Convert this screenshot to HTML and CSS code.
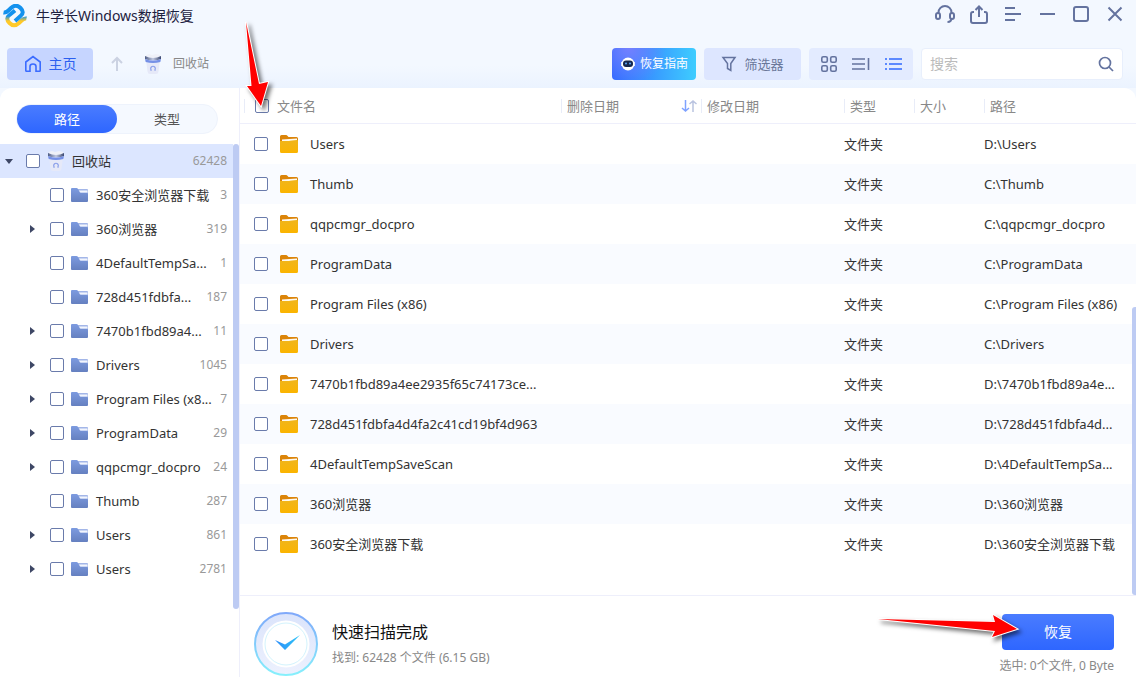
FILE: index.html
```
<!DOCTYPE html>
<html lang="zh-CN">
<head>
<meta charset="utf-8">
<meta name="viewport" content="width=device-width, initial-scale=1">
<title>牛学长Windows数据恢复</title>
<link rel="stylesheet" href="styles.css">
</head>
<body>
<svg class="defs" width="0" height="0" aria-hidden="true">
  <defs>
    <linearGradient id="g-logo" gradientUnits="userSpaceOnUse" x1="0" y1="12" x2="0" y2="17"><stop offset="0" stop-color="#1492ee"/><stop offset="1" stop-color="#ffc928"/></linearGradient>
    <linearGradient id="g-blue" x1="0" y1="0" x2="0" y2="1"><stop offset="0" stop-color="#7d9be0"/><stop offset="1" stop-color="#6580c0"/></linearGradient>
    <linearGradient id="g-gold" x1="0" y1="0" x2="0" y2="1"><stop offset="0" stop-color="#f0b51c"/><stop offset="1" stop-color="#fbb400"/></linearGradient>
    <linearGradient id="g-rim" x1="0" y1="0" x2="1" y2="0"><stop offset="0" stop-color="#4f5d85"/><stop offset=".5" stop-color="#c3cbe2"/><stop offset="1" stop-color="#3c4870"/></linearGradient>
    <linearGradient id="g-ring" x1="0" y1="0" x2="0" y2="1"><stop offset="0" stop-color="#7fa8fa"/><stop offset="1" stop-color="#86f0fc"/></linearGradient>
    <linearGradient id="g-disc" x1="0" y1="0" x2="0" y2="1"><stop offset="0" stop-color="#dbe4fb"/><stop offset="1" stop-color="#edf1fe"/></linearGradient>
    <linearGradient id="g-tick" x1="0" y1="0" x2="1" y2="0"><stop offset="0" stop-color="#2c8cf9"/><stop offset="1" stop-color="#2fc6f7"/></linearGradient>
    <symbol id="folder-blue" viewBox="0 0 18 16">
      <path d="M7 2H16Q17 2 17 3V8H7Z" fill="#a3b6e8"/>
      <path d="M8 3.500H16.500V5.500H9Z" fill="#f2f5fd"/>
      <path d="M0 2Q0 1 1 1H5.500Q6.500 1 7 2L8.500 5Q9 6 10 6H16Q17 6 17 7V14Q17 15 16 15H1Q0 15 0 14Z" fill="url(#g-blue)"/>
    </symbol>
    <symbol id="folder-gold" viewBox="0 0 18 18">
      <path d="M0 1.500Q0 0 1.500 0H6Q7 0 7.600 1L8.500 2H16.500Q18 2 18 3.500V9H0Z" fill="#db8409"/>
      <path d="M2 4.500L17 3.500V8H2Z" fill="#fffaf0"/>
      <path d="M0 6H9Q10.500 5.200 17 5Q18 5 18 6V16.500Q18 18 16.500 18H1.500Q0 18 0 16.500Z" fill="url(#g-gold)"/>
    </symbol>
    <symbol id="bin" viewBox="0 0 18 20">
      <path d="M2 1L5 0L8 1L12 0L16 1V5H2Z" fill="#eff1f8"/>
      <path d="M1 2Q9 6 17 2V5Q9 8 1 5Z" fill="url(#g-rim)"/>
      <path d="M2 6H16L14.500 17.500Q14.200 20 12 20H6Q3.800 20 3.500 17.500Z" fill="#e6e9f8"/>
      <path d="M1 5Q9 8 17 5L16.300 8Q9 10 1.700 8Z" fill="#7590e6"/>
      <path d="M7.500 16.300A2.300 2.300 0 1 1 10.500 16.300M7.500 16.500H6.500M10.500 16.500H11.500" fill="none" stroke="#8ba0ea" stroke-width="1.200"/>
    </symbol>
  </defs>
</svg>

<header class="titlebar">
  <svg class="logo" viewBox="0 0 26 24" aria-hidden="true">
    <path d="M24.500 14.500Q22 14 19 17L17 19Q12 23.500 7.500 19T7.500 11L13 6.500" fill="none" stroke="url(#g-logo)" stroke-width="4"/>
    <path d="M1.500 8.500Q4 9 7 6L9 4Q14 -.5 18.500 4T18.500 12L13 17" fill="none" stroke="#1492ee" stroke-width="4"/>
  </svg>
  <h1 class="app-name">牛学长Windows数据恢复</h1>
  <div class="window-tools">
    <button type="button" aria-label="客服"><svg viewBox="0 0 22 22"><path d="M4.500 10V8.500A6.500 6.500 0 0 1 17.500 8.500V10M17.500 14Q17.500 18 13.500 18"/><rect x="2" y="9" width="4" height="6" rx="2"/><rect x="16" y="9" width="4" height="6" rx="2"/></svg></button>
    <button type="button" aria-label="导出"><svg viewBox="0 0 22 22"><path d="M6 8H5Q3 8 3 10V17Q3 19 5 19H17Q19 19 19 17V10Q19 8 17 8H16M11 13V3M7.500 6L11 2.500L14.500 6"/></svg></button>
    <button type="button" aria-label="菜单"><svg viewBox="0 0 22 22"><path d="M3 4H13M3 10H19M3 16H13"/></svg></button>
    <button type="button" aria-label="最小化"><svg viewBox="0 0 22 22"><path d="M4 10H19"/></svg></button>
    <button type="button" aria-label="最大化"><svg viewBox="0 0 22 22"><rect x="4" y="3" width="14" height="14" rx="2"/></svg></button>
    <button type="button" aria-label="关闭"><svg viewBox="0 0 22 22"><path d="M4.500 3.500L17.500 16.500M17.500 3.500L4.500 16.500"/></svg></button>
  </div>
</header>

<nav class="toolbar">
  <button type="button" class="home"><svg viewBox="0 0 18 18" aria-hidden="true"><path d="M6 16.200H2.500Q1.800 16.200 1.800 15.500V7L9 1.500L16.200 7V15.500Q16.200 16.200 15.500 16.200H12V11.500Q12 9 9 9T6 11.500Z"/></svg>主页</button>
  <button type="button" class="up" aria-label="上一级"><svg viewBox="0 0 14 16"><path d="M7 15V2M2 7L7 2L12 7"/></svg></button>
  <div class="crumb"><svg aria-hidden="true"><use href="#bin"/></svg><span>回收站</span></div>
  <button type="button" class="guide"><svg viewBox="0 0 16 16" aria-hidden="true"><circle cx="8" cy="8" r="6.500" fill="#fff"/><path d="M1 6H2V10H1ZM14 6H15V10H14Z" fill="#dce7ff"/><rect x="3" y="4.500" width="10" height="6.500" rx="3" fill="#16284f"/><circle cx="6" cy="7.500" r="1" fill="#5ba8ff"/><circle cx="10" cy="7.500" r="1" fill="#5ba8ff"/></svg>恢复指南</button>
  <button type="button" class="filter"><svg viewBox="0 0 16 16" aria-hidden="true"><path d="M2 1.500H14L9.800 7.500V14.500L6.500 12.500V7.500Z"/></svg>筛选器</button>
  <div class="views">
    <button type="button" aria-label="网格"><svg viewBox="0 0 18 18"><rect x="1.800" y="1.800" width="5.500" height="5.500" rx="1.500"/><rect x="10.700" y="1.800" width="5.500" height="5.500" rx="1.500"/><rect x="1.800" y="10.700" width="5.500" height="5.500" rx="1.500"/><rect x="10.700" y="10.700" width="5.500" height="5.500" rx="1.500"/></svg></button>
    <button type="button" aria-label="预览"><svg viewBox="0 0 18 18"><path d="M0 4H13M0 9H13M0 14H13M16.500 3V15"/></svg></button>
    <button type="button" class="active" aria-label="列表"><svg viewBox="0 0 18 18"><path d="M1 4H3M1 9H3M1 14H3M5 4H18M5 9H18M5 14H18"/></svg></button>
  </div>
  <label class="search"><input type="search" placeholder="搜索" aria-label="搜索"><svg viewBox="0 0 16 16" aria-hidden="true"><circle cx="7" cy="7" r="5.500"/><path d="M11 11L15 15"/></svg></label>
</nav>

<main class="panel">
  <aside class="sidebar">
    <div class="tabs"><button type="button" class="tab on">路径</button><button type="button" class="tab">类型</button></div>
    <div class="tree-area">
      <ul class="tree">
        <li class="root"><i class="caret down"></i><label><input type="checkbox"><svg class="bin"><use href="#bin"/></svg><span>回收站</span></label><em>62428</em></li>
        <li><i></i><label><input type="checkbox"><svg><use href="#folder-blue"/></svg><span>360安全浏览器下载</span></label><em>3</em></li>
        <li><i class="caret"></i><label><input type="checkbox"><svg><use href="#folder-blue"/></svg><span>360浏览器</span></label><em>319</em></li>
        <li><i></i><label><input type="checkbox"><svg><use href="#folder-blue"/></svg><span>4DefaultTempSa...</span></label><em>1</em></li>
        <li><i></i><label><input type="checkbox"><svg><use href="#folder-blue"/></svg><span>728d451fdbfa...</span></label><em>187</em></li>
        <li><i class="caret"></i><label><input type="checkbox"><svg><use href="#folder-blue"/></svg><span>7470b1fbd89a4...</span></label><em>11</em></li>
        <li><i class="caret"></i><label><input type="checkbox"><svg><use href="#folder-blue"/></svg><span>Drivers</span></label><em>1045</em></li>
        <li><i class="caret"></i><label><input type="checkbox"><svg><use href="#folder-blue"/></svg><span>Program Files (x8...</span></label><em>7</em></li>
        <li><i class="caret"></i><label><input type="checkbox"><svg><use href="#folder-blue"/></svg><span>ProgramData</span></label><em>29</em></li>
        <li><i class="caret"></i><label><input type="checkbox"><svg><use href="#folder-blue"/></svg><span>qqpcmgr_docpro</span></label><em>24</em></li>
        <li><i></i><label><input type="checkbox"><svg><use href="#folder-blue"/></svg><span>Thumb</span></label><em>287</em></li>
        <li><i class="caret"></i><label><input type="checkbox"><svg><use href="#folder-blue"/></svg><span>Users</span></label><em>861</em></li>
        <li><i class="caret"></i><label><input type="checkbox"><svg><use href="#folder-blue"/></svg><span>Users</span></label><em>2781</em></li>
      </ul>
      <div class="tree-thumb"></div>
    </div>
  </aside>

  <section class="content">
    <div class="files">
      <table>
        <colgroup><col class="c-name"><col class="c-deleted"><col class="c-modified"><col class="c-type"><col class="c-size"><col class="c-path"></colgroup>
        <thead>
          <tr>
            <th><label class="head"><input type="checkbox">文件名</label></th>
            <th><span class="head">删除日期<svg class="sort" viewBox="0 0 16 14" aria-hidden="true"><path d="M4.500 1V12M1 9L4.500 12L8 9" stroke="#7fa2ff"/><path d="M12 13V2M8.500 5L12 2L15.500 5" stroke="#b9c3e0"/></svg></span></th>
            <th><span class="head">修改日期</span></th>
            <th><span class="head">类型</span></th>
            <th><span class="head">大小</span></th>
            <th><span class="head">路径</span></th>
          </tr>
        </thead>
        <tbody>
          <tr><td><label class="file"><input type="checkbox"><svg><use href="#folder-gold"/></svg>Users</label></td><td></td><td></td><td>文件夹</td><td></td><td>D:\Users</td></tr>
          <tr><td><label class="file"><input type="checkbox"><svg><use href="#folder-gold"/></svg>Thumb</label></td><td></td><td></td><td>文件夹</td><td></td><td>C:\Thumb</td></tr>
          <tr><td><label class="file"><input type="checkbox"><svg><use href="#folder-gold"/></svg>qqpcmgr_docpro</label></td><td></td><td></td><td>文件夹</td><td></td><td>C:\qqpcmgr_docpro</td></tr>
          <tr><td><label class="file"><input type="checkbox"><svg><use href="#folder-gold"/></svg>ProgramData</label></td><td></td><td></td><td>文件夹</td><td></td><td>C:\ProgramData</td></tr>
          <tr><td><label class="file"><input type="checkbox"><svg><use href="#folder-gold"/></svg>Program Files (x86)</label></td><td></td><td></td><td>文件夹</td><td></td><td>C:\Program Files (x86)</td></tr>
          <tr><td><label class="file"><input type="checkbox"><svg><use href="#folder-gold"/></svg>Drivers</label></td><td></td><td></td><td>文件夹</td><td></td><td>C:\Drivers</td></tr>
          <tr><td><label class="file"><input type="checkbox"><svg><use href="#folder-gold"/></svg>7470b1fbd89a4ee2935f65c74173ce...</label></td><td></td><td></td><td>文件夹</td><td></td><td>D:\7470b1fbd89a4e...</td></tr>
          <tr><td><label class="file"><input type="checkbox"><svg><use href="#folder-gold"/></svg>728d451fdbfa4d4fa2c41cd19bf4d963</label></td><td></td><td></td><td>文件夹</td><td></td><td>D:\728d451fdbfa4d...</td></tr>
          <tr><td><label class="file"><input type="checkbox"><svg><use href="#folder-gold"/></svg>4DefaultTempSaveScan</label></td><td></td><td></td><td>文件夹</td><td></td><td>D:\4DefaultTempSa...</td></tr>
          <tr><td><label class="file"><input type="checkbox"><svg><use href="#folder-gold"/></svg>360浏览器</label></td><td></td><td></td><td>文件夹</td><td></td><td>D:\360浏览器</td></tr>
          <tr><td><label class="file"><input type="checkbox"><svg><use href="#folder-gold"/></svg>360安全浏览器下载</label></td><td></td><td></td><td>文件夹</td><td></td><td>D:\360安全浏览器下载</td></tr>
        </tbody>
      </table>
      <div class="files-thumb"></div>
    </div>
    <footer class="status">
      <svg class="done" viewBox="0 0 64 64" aria-hidden="true">
        <circle cx="32" cy="32" r="31" fill="url(#g-disc)" stroke="url(#g-ring)" stroke-width="2"/>
        <circle cx="32" cy="32" r="23.500" fill="#fff"/>
        <circle cx="32" cy="32" r="21" fill="none" stroke="#d3f3fd"/>
        <path d="M21 28L31 32.500L46 23L31 38Z" fill="url(#g-tick)"/>
      </svg>
      <div class="summary"><h2>快速扫描完成</h2><p>找到: 62428 个文件 (6.15 GB)</p></div>
      <div class="action"><button type="button" class="recover">恢复</button><p>选中: 0个文件, 0 Byte</p></div>
    </footer>
  </section>
</main>

<svg class="pointer to-checkbox" viewBox="0 0 40 100" aria-hidden="true"><path d="M6 5L19 67L28 65L21 89L7 69L11.500 69Z"/></svg>
<svg class="pointer to-recover" viewBox="0 0 150 40" aria-hidden="true"><path d="M4 10L121 13L119 6L143 20L118 28L121 22Z"/></svg>
</body>
</html>
```

FILE: styles.css
```
* { box-sizing: border-box; }

body {
  position: relative;
  display: flex;
  flex-direction: column;
  min-height: 100vh;
  margin: 0;
  overflow-x: hidden;
  background: #f3f8ff;
  color: #333;
  font: 13px/20px "Noto Sans", "Noto Sans CJK SC", sans-serif;
}

button {
  display: flex;
  align-items: center;
  justify-content: center;
  padding: 0;
  border: 0;
  background: none;
  color: inherit;
  font: inherit;
}

h1, h2, p, ul { margin: 0; padding: 0; font-weight: 400; }

svg { flex: none; fill: none; }

.defs { position: absolute; }

input[type="checkbox"] {
  flex: none;
  width: 14px;
  height: 14px;
  margin: 0;
  appearance: none;
  border: 1px solid #6a7bab;
  border-radius: 2px;
  background: #fff;
}

/* Title bar */
.titlebar {
  display: flex;
  align-items: center;
  height: 32px;
  padding: 0 10px 0 2px;
}

.logo { width: 26px; height: 24px; }

.app-name {
  margin-left: 8px;
  color: #1d2140;
  font-size: 14px;
  line-height: 32px;
}

.window-tools {
  display: flex;
  gap: 12px;
  height: 30px;
  margin: 0 0 2px auto;
}

.window-tools svg {
  width: 22px;
  height: 22px;
  stroke: #64739f;
  stroke-width: 2;
}

/* Toolbar */
.toolbar {
  display: flex;
  align-items: center;
  height: 56px;
  padding: 8px 13px 0 7px;
  background: linear-gradient(#f3f8ff 60%, #ebf3ff);
}

.home {
  gap: 7px;
  width: 86px;
  height: 32px;
  border-radius: 4px;
  background: #c6d5ff;
  color: #2b5ff0;
  font-size: 14px;
}

.home svg { width: 18px; height: 18px; stroke: #3b6cff; stroke-width: 1.6; }

.up { margin-left: 17px; }
.up svg { width: 14px; height: 16px; stroke: #cbd2e2; stroke-width: 2; }

.crumb {
  display: flex;
  align-items: center;
  gap: 11px;
  margin-left: 20px;
  color: #888;
  font-size: 12px;
}

.crumb svg { width: 18px; height: 20px; }

.guide {
  gap: 4px;
  width: 84px;
  height: 32px;
  margin-left: auto;
  border-radius: 4px;
  background: radial-gradient(circle at 20% 0, #7480ff, transparent 50%), linear-gradient(90deg, #3269ff, #3ecdff);
  color: #fff;
  font-size: 12px;
}

.guide svg { width: 16px; height: 16px; }

.filter {
  gap: 7px;
  width: 97px;
  height: 32px;
  margin-left: 8px;
  border-radius: 4px;
  background: #dde6ff;
  color: #6a7799;
}

.filter svg { width: 16px; height: 16px; stroke: #64739f; stroke-width: 1.5; }

.views {
  display: flex;
  align-items: center;
  justify-content: center;
  gap: 14px;
  width: 104px;
  height: 32px;
  margin-left: 8px;
  border-radius: 4px;
  background: #e3ebff;
}

.views svg { width: 18px; height: 18px; stroke: #64739f; stroke-width: 1.6; }
.views .active svg { stroke: #3169ff; }

.search {
  display: flex;
  align-items: center;
  width: 202px;
  height: 32px;
  margin-left: 8px;
  padding: 0 8px;
  border: 1px solid #e8effc;
  border-radius: 4px;
  background: #fff;
}

.search input {
  flex: 1;
  min-width: 0;
  padding: 0;
  border: 0;
  outline: 0;
  background: none;
  font: inherit;
  font-size: 14px;
}

.search input::placeholder { color: #bbb; }
.search svg { width: 16px; height: 16px; stroke: #64739f; stroke-width: 1.7; }

/* Panel */
.panel {
  display: flex;
  flex: 1;
  border-radius: 12px 12px 0 0;
  background: #fff;
}

.sidebar {
  flex: none;
  width: 240px;
  border-right: 1px solid #eeeffb;
}

.tabs {
  display: flex;
  width: 202px;
  margin: 16px 0 10px 16px;
  border: 1px solid #eef3fc;
  border-radius: 15px;
  background: #f5f9ff;
}

.tab {
  flex: 1;
  height: 28px;
  border-radius: 14px;
  color: #555;
}

.tab.on { background: linear-gradient(#4a7cff, #2e66ff); color: #fff; }

.tree-area { display: flex; }

.tree { flex: 1; min-width: 0; list-style: none; }

.tree li {
  display: flex;
  align-items: center;
  height: 34px;
  padding: 0 6px 0 30px;
}

.tree .root { padding-left: 5px; background: #dce6ff; }

.tree i { flex: none; width: 20px; }
.tree .root i { width: 21px; }

.caret::before {
  content: "";
  display: block;
  width: 0;
  border: 4px solid transparent;
  border-left: 5px solid #3e4765;
  border-right: 0;
}

.caret.down::before {
  border: 4px solid transparent;
  border-top: 5px solid #3e4765;
  border-bottom: 0;
}

.tree label { display: flex; align-items: center; white-space: nowrap; }

.tree svg { width: 18px; height: 16px; margin: 0 7px; }
.tree svg.bin { height: 20px; }

.tree em {
  margin-left: auto;
  color: #999;
  font-size: 12px;
  font-style: normal;
}

.tree-thumb {
  width: 6px;
  height: 465px;
  border-radius: 3px;
  background: #bdcbf3;
}

/* File list */
.content {
  display: flex;
  flex: 1;
  flex-direction: column;
  min-width: 0;
}

.files { position: relative; flex: 1; }

.files-thumb {
  position: absolute;
  right: 0;
  bottom: 0;
  width: 4px;
  height: 288px;
  border-radius: 3px 0 0 3px;
  background: #bdcbf3;
}

table { width: 100%; border-collapse: separate; border-spacing: 0; table-layout: fixed; }

.c-name { width: 321px; }
.c-deleted { width: 140px; }
.c-modified { width: 143px; }
.c-type, .c-size { width: 70px; }

th, td { padding: 0; text-align: left; font-weight: 400; white-space: nowrap; }

th { height: 36px; border-bottom: 1px solid #eeeffb; color: #888; }

.head {
  display: flex;
  align-items: center;
  height: 14px;
  padding-left: 5px;
  border-left: 1px solid #e8ecf8;
}

th:first-child .head { gap: 8px; margin-left: 4px; padding-left: 10px; }

.sort { width: 16px; height: 14px; margin: 0 4px 0 auto; stroke-width: 1.5; }

td { height: 40px; }

tbody tr:nth-child(even) { background: #f9fbff; }

.file { display: flex; align-items: center; padding-left: 14px; }
.file svg { width: 18px; height: 18px; margin: 0 12px; }

/* Status bar */
.status {
  display: flex;
  align-items: flex-start;
  min-height: 82px;
  padding: 16px 22px 0 14px;
  border-top: 1px solid #eeeffb;
}

.done { width: 64px; height: 64px; }

.summary { margin: 6px 0 0 14px; }
.summary h2 { color: #111; font-size: 16px; line-height: 28px; }
.summary p, .action p { color: #888; font-size: 12px; line-height: 24px; }

.action { margin: 2px 0 0 auto; text-align: right; }
.action p { line-height: 20px; }

.recover {
  width: 112px;
  height: 36px;
  margin: 0 0 6px auto;
  border-radius: 4px;
  background: linear-gradient(#4a7cff, #2e66ff);
  color: #fff;
  font-size: 14px;
}

/* Annotation arrows over the window */
.pointer {
  position: absolute;
  overflow: visible;
  fill: #f00;
  stroke: #fff;
  stroke-width: 2;
  paint-order: stroke;
  filter: drop-shadow(3px 3px 2px rgba(0, 0, 0, 0.55));
  pointer-events: none;
}

.to-checkbox { top: 17px; left: 240px; width: 40px; height: 100px; }
.to-recover { right: 112px; bottom: 28px; width: 150px; height: 40px; }
```
